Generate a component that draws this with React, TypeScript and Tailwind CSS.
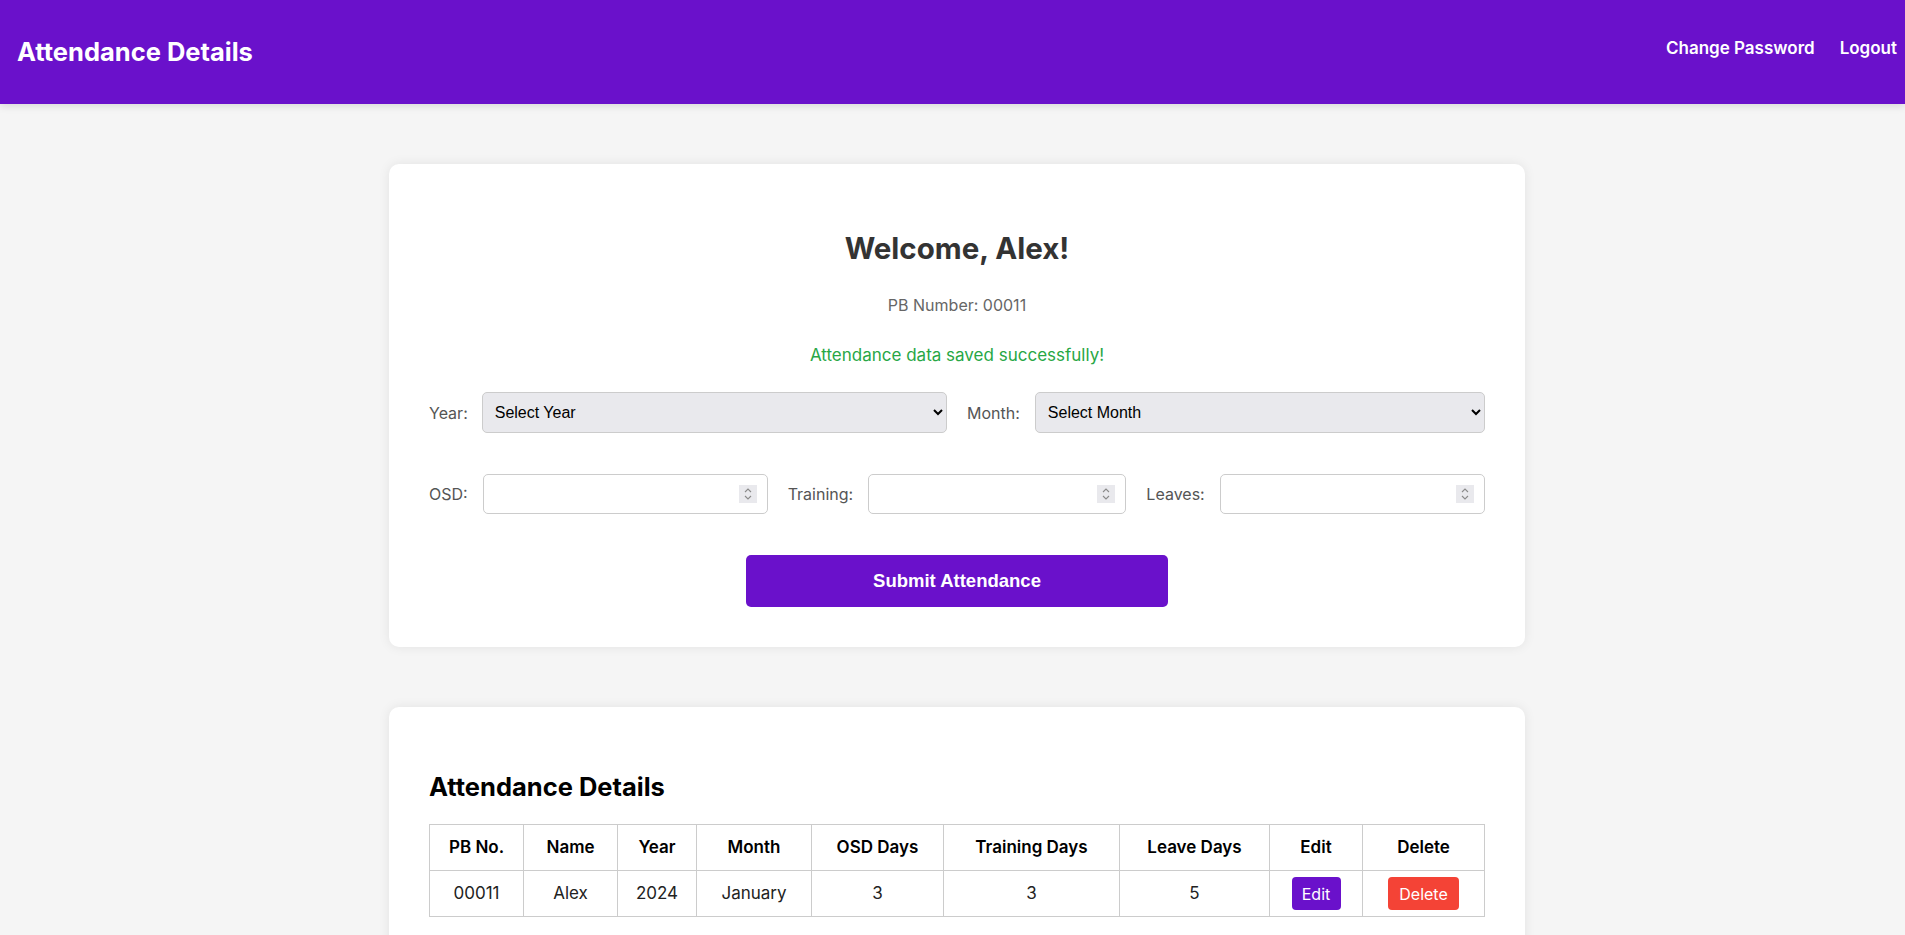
import { useState } from 'react';

const font = "font-['Inter',sans-serif]";
const sysFont = "font-['Liberation_Sans',Arial,sans-serif]";

const years = ['2023', '2024', '2025'];
const months = [
    'January', 'February', 'March', 'April', 'May', 'June',
    'July', 'August', 'September', 'October', 'November', 'December',
];

const rows = [
    { pb: '00011', name: 'Alex', year: '2024', month: 'January', osd: 3, training: 3, leave: 5 },
];

const Spinner = () => (
    <span className="pointer-events-none absolute right-[11px] top-1/2 -translate-y-1/2 w-[18px] h-[18px] bg-[#e9e9ed] flex flex-col items-center justify-center gap-[2px]">
        <svg width="8" height="5" viewBox="0 0 8 5" fill="none">
            <path d="M1 4L4 1L7 4" stroke="#8a8a8a" strokeWidth="1.1" />
        </svg>
        <svg width="8" height="5" viewBox="0 0 8 5" fill="none">
            <path d="M1 1L4 4L7 1" stroke="#8a8a8a" strokeWidth="1.1" />
        </svg>
    </span>
);

const NumberField = ({ label, value, onChange }: { label: string; value: string; onChange: (v: string) => void }) => (
    <div className="flex-1 flex items-center gap-[15px]">
        <label className="text-[16px] text-[#555]">{label}</label>
        <div className="relative flex-1">
            <input
                type="text"
                inputMode="numeric"
                value={value}
                onChange={(e) => onChange(e.target.value)}
                className="w-full h-[40px] px-[10px] bg-white border border-[#ccc] rounded-[5px] outline-none"
            />
            <Spinner />
        </div>
    </div>
);

export default function App() {
    const [year, setYear] = useState('');
    const [month, setMonth] = useState('');
    const [osd, setOsd] = useState('');
    const [training, setTraining] = useState('');
    const [leaves, setLeaves] = useState('');

    return (
        <div className={`min-h-screen bg-[#f5f5f5] ${font} pb-[60px]`}>
            <header className="h-[104px] bg-[#6a11cb] flex items-center justify-between pl-[17px] pr-[8px] shadow-[0_2px_8px_rgba(0,0,0,0.12)]">
                <h1 className="text-[25.5px] font-bold text-white pt-[1px]">Attendance Details</h1>
                <nav className="flex items-center gap-[25px] text-[17px] font-semibold text-white pb-[6px]">
                    <a href="#">Change Password</a>
                    <a href="#">Logout</a>
                </nav>
            </header>

            <main className="ml-[389px] w-[1136px] flex flex-col gap-[60px] pt-[60px]">
                <section className="bg-white rounded-[10px] shadow-[0_0_12px_rgba(0,0,0,0.08)] p-[40px]">
                    <h2 className="mt-[27px] text-[29.5px] leading-[34px] font-bold text-[#333] text-center">Welcome, Alex!</h2>
                    <p className="mt-[28px] text-[16px] leading-[24px] text-[#666] text-center">PB Number: 00011</p>
                    <p className="mt-[26px] text-[17px] leading-[24px] text-[#28a745] text-center">Attendance data saved successfully!</p>

                    <div className="mt-[25px] flex gap-[20px]">
                        <div className="flex-1 flex items-center gap-[14px]">
                            <label className="text-[16px] text-[#555]">Year:</label>
                            <select
                                value={year}
                                onChange={(e) => setYear(e.target.value)}
                                className={`flex-1 h-[41px] px-[8px] bg-[#e9e9ed] border border-[#ccc] rounded-[5px] text-[16px] text-black ${sysFont}`}
                            >
                                <option value="">Select Year</option>
                                {years.map((y) => (
                                    <option key={y} value={y}>{y}</option>
                                ))}
                            </select>
                        </div>
                        <div className="flex-1 flex items-center gap-[15px]">
                            <label className="text-[16px] text-[#555]">Month:</label>
                            <select
                                value={month}
                                onChange={(e) => setMonth(e.target.value)}
                                className={`flex-1 h-[41px] px-[8px] bg-[#e9e9ed] border border-[#ccc] rounded-[5px] text-[16px] text-black ${sysFont}`}
                            >
                                <option value="">Select Month</option>
                                {months.map((m) => (
                                    <option key={m} value={m}>{m}</option>
                                ))}
                            </select>
                        </div>
                    </div>

                    <div className="mt-[41px] flex gap-[20px]">
                        <NumberField label="OSD:" value={osd} onChange={setOsd} />
                        <NumberField label="Training:" value={training} onChange={setTraining} />
                        <NumberField label="Leaves:" value={leaves} onChange={setLeaves} />
                    </div>

                    <div className="mt-[41px] flex justify-center">
                        <button className={`w-[40%] h-[52px] bg-[#6a11cb] text-white rounded-[5px] text-[18.5px] font-bold ${sysFont}`}>
                            Submit Attendance
                        </button>
                    </div>
                </section>

                <section className="bg-white rounded-[10px] shadow-[0_0_12px_rgba(0,0,0,0.08)] p-[40px]">
                    <h2 className="mt-[24px] text-[25.5px] leading-[32px] font-bold text-black">Attendance Details</h2>
                    <table className="mt-[21px] w-full table-fixed border-collapse text-[17px] text-center">
                        <colgroup>
                            <col className="w-[94px]" />
                            <col className="w-[94px]" />
                            <col className="w-[79px]" />
                            <col className="w-[115px]" />
                            <col className="w-[132px]" />
                            <col className="w-[176px]" />
                            <col className="w-[150px]" />
                            <col className="w-[93px]" />
                            <col className="w-[122px]" />
                        </colgroup>
                        <thead>
                            <tr className="h-[46px]">
                                {['PB No.', 'Name', 'Year', 'Month', 'OSD Days', 'Training Days', 'Leave Days', 'Edit', 'Delete'].map((h) => (
                                    <th key={h} className="border border-[#ccc] font-semibold text-black px-2">{h}</th>
                                ))}
                            </tr>
                        </thead>
                        <tbody>
                            {rows.map((r) => (
                                <tr key={r.pb} className="h-[46px] text-[#222]">
                                    <td className="border border-[#ccc] px-2">{r.pb}</td>
                                    <td className="border border-[#ccc] px-2">{r.name}</td>
                                    <td className="border border-[#ccc] px-2">{r.year}</td>
                                    <td className="border border-[#ccc] px-2">{r.month}</td>
                                    <td className="border border-[#ccc] px-2">{r.osd}</td>
                                    <td className="border border-[#ccc] px-2">{r.training}</td>
                                    <td className="border border-[#ccc] px-2">{r.leave}</td>
                                    <td className="border border-[#ccc] px-2">
                                        <button className="w-[49px] h-[33px] bg-[#6a11cb] text-white text-[16px] rounded-[4px] align-middle">Edit</button>
                                    </td>
                                    <td className="border border-[#ccc] px-2">
                                        <button className="w-[71px] h-[33px] bg-[#f44336] text-white text-[16px] rounded-[4px] align-middle">Delete</button>
                                    </td>
                                </tr>
                            ))}
                        </tbody>
                    </table>
                </section>
            </main>
        </div>
    );
}
